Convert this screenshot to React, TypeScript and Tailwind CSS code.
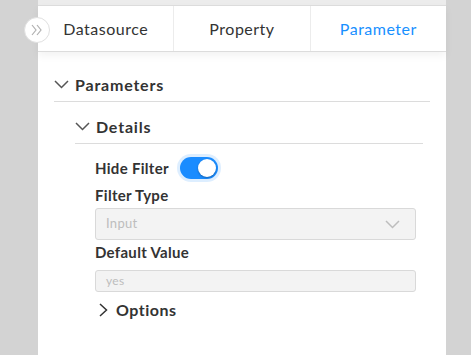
import React from "react";

const font = { fontFamily: "Lato, 'Noto Sans', sans-serif" };

function ChevronDown({ className = "" }: { className?: string }) {
  return (
    <svg className={className} width="15" height="9" viewBox="0 0 15 9" fill="none">
      <polyline points="1,1 7.5,7.5 14,1" stroke="currentColor" strokeWidth="1.5" />
    </svg>
  );
}

function ChevronRight({ className = "" }: { className?: string }) {
  return (
    <svg className={className} width="9" height="14" viewBox="0 0 9 14" fill="none">
      <polyline points="1,1 7.5,7 1,13" stroke="currentColor" strokeWidth="1.5" />
    </svg>
  );
}

const tabs = ["Datasource", "Property", "Parameter"];

export default function App() {
  return (
    <div className="relative flex h-[355px] w-[471px] bg-[#d3d3d3] overflow-hidden" style={font}>
      <div className="w-[38px] shrink-0" />
      <div className="w-[408px] shrink-0 bg-white flex flex-col">
        <div className="bg-[#ececec] pt-[5px]">
          <div className="flex h-[47px] bg-white border-t border-b border-[#dcdcdc] shadow-[0_4px_8px_rgba(0,0,0,0.05)]">
            {tabs.map((t, i) => (
              <div
                key={t}
                className={`flex-1 flex items-center justify-center text-[16px] tracking-[0.5px] ${
                  i < 2 ? "border-r border-[#ececec]" : ""
                } ${i === 2 ? "text-[#1890ff]" : "text-[#333]"}`}
              >
                {t}
              </div>
            ))}
          </div>
        </div>

        <div className="ml-[16px] mr-[16px] mt-[16px]">
          <div className="flex items-center h-[34px] border-b border-[#dcdcdc] text-[#333]">
            <ChevronDown className="text-[#555] mr-[6px]" />
            <span className="text-[16px] font-bold tracking-[0.8px]">Parameters</span>
          </div>

          <div className="ml-[21px] mr-[7px] mt-[8px]">
            <div className="flex items-center h-[34px] border-b border-[#dcdcdc] text-[#333]">
              <ChevronDown className="text-[#555] mr-[6px]" />
              <span className="text-[16px] font-bold tracking-[0.8px]">Details</span>
            </div>

            <div className="ml-[20px] mr-[7px] text-[#333]">
              <div className="flex items-center h-[22px] mt-[13px]">
                <span className="text-[15px] font-bold tracking-[0.3px]">Hide Filter</span>
                <div className="ml-[11px] w-[38px] h-[22px] rounded-full bg-[#1a8cff] shadow-[0_0_0_3px_rgba(24,144,255,0.15)] flex items-center justify-end pr-[2px]">
                  <div className="w-[18px] h-[18px] rounded-full bg-white shadow-[0_1px_2px_rgba(0,0,0,0.3)]" />
                </div>
              </div>
              <div className="h-[20px] mt-[6px] flex items-center text-[15px] font-bold tracking-[0.3px]">Filter Type</div>
              <div className="mt-[3px] h-[32px] rounded-[3px] border border-[#d9d9d9] bg-[#f3f3f3] flex items-center justify-between pl-[10px] pr-[15px]">
                <span className="text-[13px] tracking-[0.3px] text-[#bdbdbd]">Input</span>
                <ChevronDown className="text-[#bdbdbd]" />
              </div>
              <div className="h-[20px] mt-[2px] flex items-center text-[15px] font-bold tracking-[0.3px]">Default Value</div>
              <div className="mt-[8px] h-[22px] rounded-[3px] border border-[#d9d9d9] bg-[#f3f3f3] flex items-center pl-[10px]">
                <span className="text-[12px] tracking-[0.3px] text-[#bdbdbd]">yes</span>
              </div>
              <div className="h-[20px] mt-[8px] flex items-center">
                <ChevronRight className="text-[#333] ml-[4px] mr-[8px]" />
                <span className="text-[16px] font-bold tracking-[0.5px]">Options</span>
              </div>
            </div>
          </div>
        </div>
      </div>
      <div className="flex-1" />

      <div className="absolute left-[24px] top-[17px] w-[26px] h-[26px] rounded-full bg-white border border-[#e0e0e0] flex items-center justify-center text-[#b0b0b0]">
        <svg width="14" height="12" viewBox="0 0 14 12" fill="none">
          <polyline points="2,1 6,6 2,11" stroke="currentColor" strokeWidth="1.2" />
          <polyline points="7,1 11,6 7,11" stroke="currentColor" strokeWidth="1.2" />
        </svg>
      </div>
    </div>
  );
}
